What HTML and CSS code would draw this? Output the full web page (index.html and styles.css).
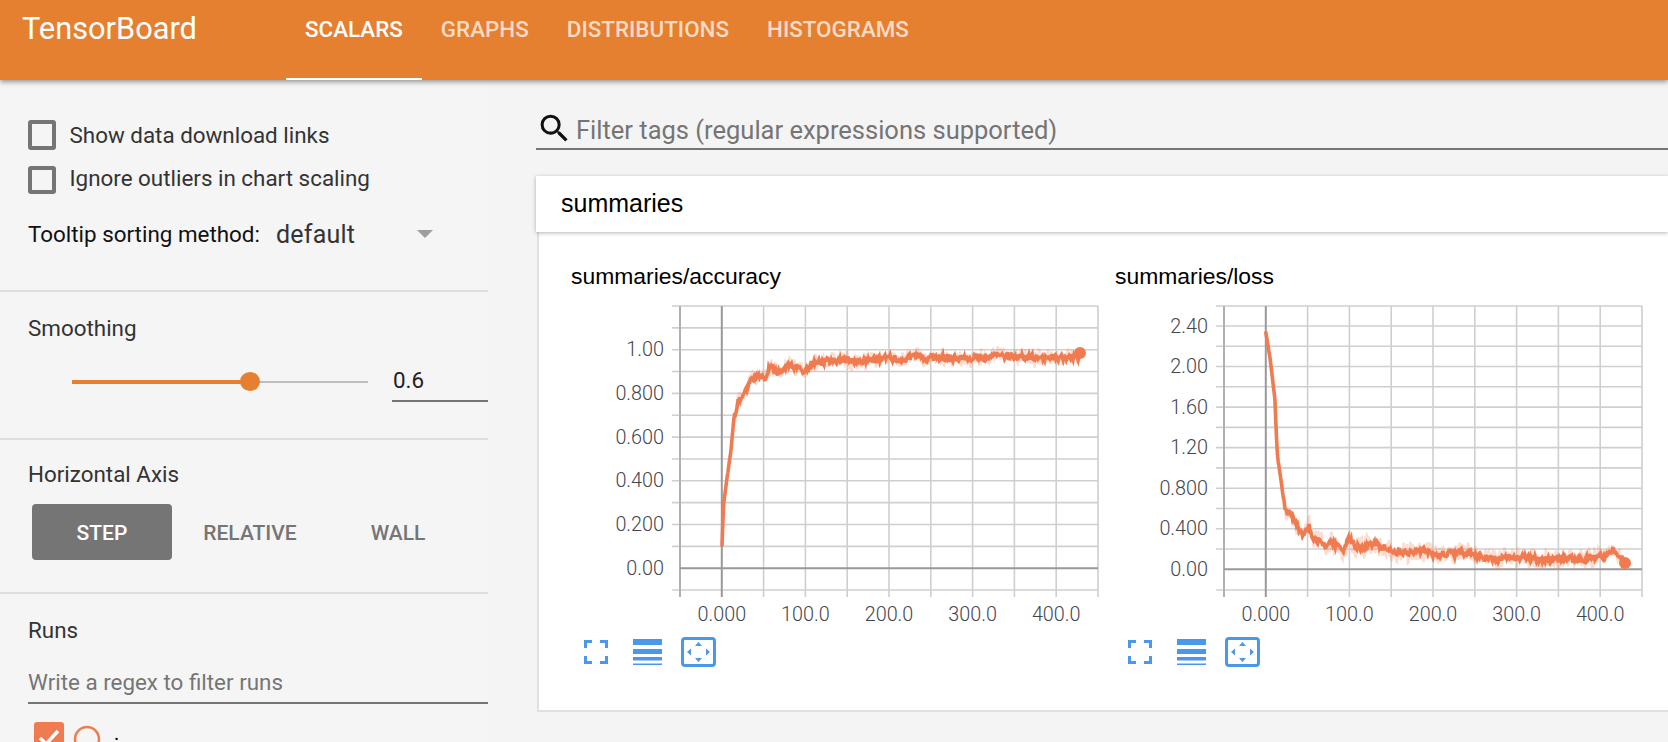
FILE: index.html
```html
<!DOCTYPE html>
<html lang="en">
<head>
<meta charset="utf-8">
<title>TensorBoard</title>
<link rel="stylesheet" href="styles.css">
</head>
<body>
<header class="topbar">
  <div class="brand">TensorBoard</div>
  <nav class="tabs">
    <a class="tab tab-active">SCALARS</a>
    <a class="tab">GRAPHS</a>
    <a class="tab">DISTRIBUTIONS</a>
    <a class="tab">HISTOGRAMS</a>
  </nav>
</header>
<div class="layout">
  <aside class="sidebar">
    <section class="sec sec-options">
      <label class="check-row check-row-a"><span class="box"></span><span class="check-text-a">Show data download links</span></label>
      <label class="check-row check-row-b"><span class="box box-b"></span><span class="check-text-b">Ignore outliers in chart scaling</span></label>
      <div class="select-row">
        <span class="select-label">Tooltip sorting method:</span>
        <span class="select-value">default</span>
        <span class="select-arrow"></span>
      </div>
    </section>
    <section class="sec sec-smooth">
      <div class="sec-title">Smoothing</div>
      <div class="slider-row">
        <div class="slider"><div class="slider-fill"></div><div class="slider-thumb"></div></div>
        <div class="slider-value">0.6</div>
      </div>
    </section>
    <section class="sec sec-axis">
      <div class="sec-title">Horizontal Axis</div>
      <div class="segments">
        <div class="seg seg-on">STEP</div>
        <div class="seg seg-relative">RELATIVE</div>
        <div class="seg seg-wall">WALL</div>
      </div>
    </section>
    <section class="sec sec-runs">
      <div class="sec-title">Runs</div>
      <div class="runs-filter">Write a regex to filter runs</div>
      <div class="run-row">
        <span class="run-check"><svg viewBox="0 0 30 30" width="30" height="30"><path class="run-tick" d="M6 16l6 6L24 9"/></svg></span>
        <svg class="run-dot" viewBox="0 0 30 30" width="30" height="30"><circle cx="15" cy="15" r="12"/></svg>
        <span class="run-name">.</span>
      </div>
    </section>
  </aside>
  <main class="content">
    <div class="search">
      <svg class="search-icon" viewBox="0 0 24 24" width="37" height="37"><path d="M15.5 14h-.79l-.28-.27A6.471 6.471 0 0 0 16 9.5 6.5 6.5 0 1 0 9.5 16c1.61 0 3.09-.59 4.23-1.57l.27.28v.79l5 4.99L20.49 19l-4.99-5zm-6 0C7.01 14 5 11.99 5 9.5S7.01 5 9.5 5 14 7.01 14 9.5 11.99 14 9.5 14z"/></svg>
      <span class="search-text">Filter tags (regular expressions supported)</span>
    </div>
    <div class="group-head">summaries</div>
    <div class="group-body">
      <figure class="chart">
        <figcaption class="chart-title">summaries/accuracy</figcaption>
        <svg class="plot" width="544" height="334" viewBox="0 0 544 334">
          <path class="grid" d="M101 10H527M101 31.85H527M101 53.7H527M101 75.55H527M101 97.4H527M101 119.25H527M101 141.1H527M101 162.95H527M101 184.8H527M101 206.65H527M101 228.5H527M101 250.35H527M101 294H527M192.6 10V301M234.4 10V301M276.2 10V301M318 10V301M359.8 10V301M401.6 10V301M443.4 10V301M485.2 10V301M527 10V301"/>
          <path class="axis-edge" d="M109 10V301"/>
          <path class="axis-zero" d="M150.8 10V301M109 272.2H527"/>
          <g data-series="accuracy" data-ox="571" data-oy="296"></g>
          <g class="ticks ticks-y">
            <text x="93" y="60">1.00</text><text x="93" y="104">0.800</text><text x="93" y="147.500">0.600</text><text x="93" y="191">0.400</text><text x="93" y="235">0.200</text><text x="93" y="278.500">0.00</text>
          </g>
          <g class="ticks ticks-x">
            <text x="150.800" y="325">0.000</text><text x="234.400" y="325">100.0</text><text x="318" y="325">200.0</text><text x="401.600" y="325">300.0</text><text x="485.200" y="325">400.0</text>
          </g>
        </svg>
        <div class="tools">
          <button class="tool"><svg width="24" height="24" viewBox="0 0 24 24"><path d="M0 0h8v3H3v5H0zM16 0h8v8h-3V3h-5zM0 16h3v5h5v3H0zM21 16h3v8h-8v-3h5z"/></svg></button>
          <button class="tool"><svg width="29" height="26" viewBox="0 0 29 26"><path d="M0 0h29v6H0zM0 10h29v5H0zM0 18h29v3.500H0zM0 24.500h29V26H0z"/></svg></button>
          <button class="tool"><svg width="35" height="30" viewBox="0 0 35 30"><rect class="tool-frame" x="1.500" y="1.500" width="32" height="27" rx="2.500"/><path d="M17.500 5l3.500 4h-7zM17.500 25l-3.500-4h7zM6 15l4-3.500v7zM29 15l-4-3.500v7z"/></svg></button>
        </div>
      </figure>
      <figure class="chart">
        <figcaption class="chart-title">summaries/loss</figcaption>
        <svg class="plot" width="544" height="334" viewBox="0 0 544 334">
          <path class="grid" d="M101 10H527M101 30H527M101 50.300H527M101 70.500H527M101 90.800H527M101 111.100H527M101 131.400H527M101 151.600H527M101 171.900H527M101 192.200H527M101 212.500H527M101 232.700H527M101 253H527M101 294H527M192.600 10V301M234.400 10V301M276.200 10V301M318 10V301M359.800 10V301M401.600 10V301M443.400 10V301M485.200 10V301M527 10V301"/>
          <path class="axis-edge" d="M109 10V301"/>
          <path class="axis-zero" d="M150.800 10V301M109 273.300H527"/>
          <g data-series="loss" data-ox="1115" data-oy="296"></g>
          <g class="ticks ticks-y">
            <text x="93" y="36.500">2.40</text><text x="93" y="77">2.00</text><text x="93" y="117.500">1.60</text><text x="93" y="158">1.20</text><text x="93" y="198.500">0.800</text><text x="93" y="239">0.400</text><text x="93" y="279.500">0.00</text>
          </g>
          <g class="ticks ticks-x">
            <text x="150.800" y="325">0.000</text><text x="234.400" y="325">100.0</text><text x="318" y="325">200.0</text><text x="401.600" y="325">300.0</text><text x="485.200" y="325">400.0</text>
          </g>
        </svg>
        <div class="tools">
          <button class="tool"><svg width="24" height="24" viewBox="0 0 24 24"><path d="M0 0h8v3H3v5H0zM16 0h8v8h-3V3h-5zM0 16h3v5h5v3H0zM21 16h3v8h-8v-3h5z"/></svg></button>
          <button class="tool"><svg width="29" height="26" viewBox="0 0 29 26"><path d="M0 0h29v6H0zM0 10h29v5H0zM0 18h29v3.500H0zM0 24.500h29V26H0z"/></svg></button>
          <button class="tool"><svg width="35" height="30" viewBox="0 0 35 30"><rect class="tool-frame" x="1.500" y="1.500" width="32" height="27" rx="2.500"/><path d="M17.500 5l3.500 4h-7zM17.500 25l-3.500-4h7zM6 15l4-3.500v7zM29 15l-4-3.500v7z"/></svg></button>
        </div>
      </figure>
    </div>
  </main>
</div>
<script src="script.js"></script>
</body>
</html>
```
FILE: styles.css
```css
* { box-sizing: border-box; }
html, body { margin: 0; height: 100%; overflow: hidden; }
body { background: #f4f4f4; font-family: Roboto, "Liberation Sans", sans-serif; color: #212121; display: flex; flex-direction: column; }

.topbar { height: 80px; flex: none; background: #e68031; display: flex; box-shadow: 0 2px 5px rgba(0,0,0,.4); position: relative; z-index: 2; color: #fff; }
.brand { width: 286px; padding: 11px 0 0 22px; font-size: 30.750px; line-height: 36px; }
.tabs { display: flex; }
.tab { padding: 15px 19px 0; height: 80px; font-size: 22.400px; line-height: 28px; font-weight: 500; color: rgba(255,255,255,.72); border-bottom: 2px solid transparent; }
.tab-active { color: #fff; border-bottom-color: #fff; }

.layout { flex: 1; display: flex; min-height: 0; }
.sidebar { width: 488px; flex: none; background: #f5f5f5; }
.sec { padding-left: 28px; border-bottom: 2px solid #dedede; }
.sec-options { padding-top: 40px; padding-bottom: 36px; }
.sec-smooth { padding-top: 24px; padding-bottom: 36px; }
.sec-axis { padding-top: 22px; padding-bottom: 32px; }
.sec-runs { padding-top: 24px; border-bottom: 0; }
.sec-title { height: 24px; font-size: 22.400px; line-height: 24px; color: #333; }

.check-row { display: flex; align-items: center; gap: 13.500px; font-size: 22.400px; color: #333; }
.check-row-a { height: 30px; }
.check-row-b { height: 28px; margin-top: 16px; }
.check-text-a { margin-top: -1px; }
.check-text-b { margin-top: -4px; }
.box { width: 28px; height: 30px; border: 4px solid #757575; border-radius: 3px; }
.box-b { height: 28px; }
.select-row { display: flex; align-items: center; height: 40px; margin-top: 20px; }
.select-label { width: 248px; font-size: 22.400px; color: #111; }
.select-value { width: 141px; font-size: 25px; letter-spacing: .2px; color: #333; }
.select-arrow { width: 0; height: 0; border-left: 8px solid transparent; border-right: 8px solid transparent; border-top: 8px solid #9e9e9e; }

.slider-row { display: flex; align-items: center; height: 41px; margin-top: 21px; }
.slider { position: relative; width: 296px; height: 2px; margin-left: 44px; background: #bdbdbd; }
.slider-fill { position: absolute; left: 0; top: -1px; width: 60%; height: 4px; background: #e68031; }
.slider-thumb { position: absolute; left: 168px; top: -9px; width: 20px; height: 19px; border-radius: 50%; background: #e68031; }
.slider-value { width: 96px; height: 41px; margin-left: 24px; border-bottom: 2px solid #757575; font-size: 22.400px; line-height: 39px; padding-left: 1px; color: #222; }

.segments { display: flex; margin: 18px 0 0 4px; height: 56px; font-size: 21px; font-weight: 500; color: #757575; align-items: flex-start; text-align: center; }
.seg { height: 56px; line-height: 58px; }
.seg-on { width: 140px; background: #757575; color: #fff; border-radius: 4px; }
.seg-relative { width: 156px; }
.seg-wall { width: 100px; margin-left: 20px; }

.runs-filter { width: 460px; height: 40px; margin-top: 22px; border-bottom: 2px solid #757575; font-size: 22.400px; line-height: 37px; color: #757575; }
.run-row { display: flex; align-items: flex-start; margin: 18px 0 0 6px; }
.run-check { width: 30px; height: 30px; background: #f17b50; border-radius: 3px; }
.run-tick { fill: none; stroke: #fff; stroke-width: 3.500; }
.run-dot { margin: 2px 0 0 8px; }
.run-dot circle { fill: none; stroke: #f17b50; stroke-width: 2.500; }
.run-name { margin-left: 12px; font-size: 20px; line-height: 22px; color: #000; }

.content { flex: 1; margin-left: 48px; min-width: 0; }
.search { height: 42px; margin-top: 28px; display: flex; align-items: center; border-bottom: 2px solid #757575; }
.search-icon { flex: none; margin-top: 1px; fill: #111; }
.search-text { margin-left: 3px; padding-top: 3px; font-size: 25.500px; color: #757575; }
.group-head { height: 56px; margin-top: 26px; padding-left: 25px; background: #fff; font-family: "Liberation Sans", Arial, sans-serif; font-size: 25px; line-height: 55px; color: #000; box-shadow: 0 1px 4px rgba(0,0,0,.3); position: relative; }
.group-body { height: 480px; margin-left: 1px; padding: 31px 0 0 32px; display: flex; background: #fff; border: 2px solid #e0e0e0; border-width: 0 0 2px 2px; }

.chart { width: 544px; flex: none; margin: 0; }
.chart-title { height: 26px; margin-bottom: 7px; font-family: "Liberation Sans", Arial, sans-serif; font-size: 22.900px; line-height: 26px; color: #000; }
.plot { display: block; }
.grid { fill: none; stroke: #cfcfcf; stroke-width: 1.600; }
.axis-edge { fill: none; stroke: #b0b0b0; stroke-width: 2; }
.axis-zero { fill: none; stroke: #999; stroke-width: 2; }
.ticks text { font-family: Roboto, "Liberation Sans", sans-serif; font-weight: 300; font-size: 19.800px; fill: #44444f; }
.ticks-y text { text-anchor: end; }
.ticks-x text { text-anchor: middle; }
.band { fill: none; stroke: #f17b50; stroke-width: 2.400; opacity: .26; }
.line { fill: none; stroke: #f17b50; stroke-width: 3.600; stroke-linejoin: miter; }
.dot { fill: #f17b50; }

.tools { display: flex; height: 30px; margin-top: 7px; margin-left: -1px; }
.tool { width: 51.500px; height: 30px; padding: 0; border: 0; background: none; display: flex; align-items: center; justify-content: center; }
.tool svg { fill: #4a97ec; }
.tool-frame { fill: none; stroke: #4a97ec; stroke-width: 3; }
```
FILE: script.js
```js
// Draws the two scalar series: a noisy raw trace and its smoothed line.
var SERIES = {
  accuracy: {
    start: 735, amp: 6.5, raw: 10,
    points: [[722,546.5],[723.5,505],[727,478],[731,450],[734,417],[738,400],[745,394],[750,382],[757,374],[765,380],[769,366],[775,372],[785,367],[800,366],[804,371],[812,364],[830,361],[870,360],[900,358],[950,358],[1000,356],[1040,358],[1078,357],[1080,354]],
    dot: [1080, 353]
  },
  loss: {
    start: 1284, amp: 6.5, raw: 12,
    points: [[1265.7,331.5],[1270,358],[1275,400],[1277,450],[1278,460],[1281,480],[1283,496],[1286,512],[1290,513],[1295,523],[1302,535],[1309,525],[1312,538],[1320,541],[1325,545],[1331,540],[1337,546],[1345,550],[1347,538],[1355,545],[1363,548],[1371,543],[1380,546],[1395,552],[1420,551],[1433,554],[1470,554],[1490,559],[1515,556],[1543,560],[1600,558],[1612,551],[1625,561]],
    dot: [1625, 563]
  }
};
var seed = 12345;
function rand() {
  seed = (seed * 16807) % 2147483647;
  return seed / 2147483647 - 0.5;
}
function valueAt(points, x) {
  for (var i = 1; i < points.length; i++) {
    if (x <= points[i][0]) {
      var a = points[i - 1], b = points[i];
      return a[1] + (b[1] - a[1]) * (x - a[0]) / (b[0] - a[0]);
    }
  }
  return points[points.length - 1][1];
}
function el(name, cls, attrs) {
  var node = document.createElementNS("http://www.w3.org/2000/svg", name);
  node.setAttribute("class", cls);
  for (var k in attrs) node.setAttribute(k, attrs[k]);
  return node;
}
document.querySelectorAll("[data-series]").forEach(function (g) {
  var s = SERIES[g.dataset.series], ox = +g.dataset.ox, oy = +g.dataset.oy;
  var first = s.points[0][0], last = s.points[s.points.length - 1][0];
  var raw = "", smooth = "", prev = 0;
  for (var x = first; x <= last; x += 0.836) {
    var y = valueAt(s.points, x), on = x > s.start ? 1 : 0.08;
    prev = prev * 0.3 + rand() * s.amp;
    var sy = y + prev * on;
    var ry = y + prev * on + rand() * s.raw * on * 1.6;
    smooth += (smooth ? "L" : "M") + (x - ox).toFixed(1) + " " + (sy - oy).toFixed(1);
    raw += (raw ? "L" : "M") + (x - ox).toFixed(1) + " " + (ry - oy).toFixed(1);
  }
  g.appendChild(el("path", "band", { d: raw }));
  g.appendChild(el("path", "line", { d: smooth }));
  g.appendChild(el("circle", "dot", { cx: s.dot[0] - ox, cy: s.dot[1] - oy, r: 6 }));
});
```
